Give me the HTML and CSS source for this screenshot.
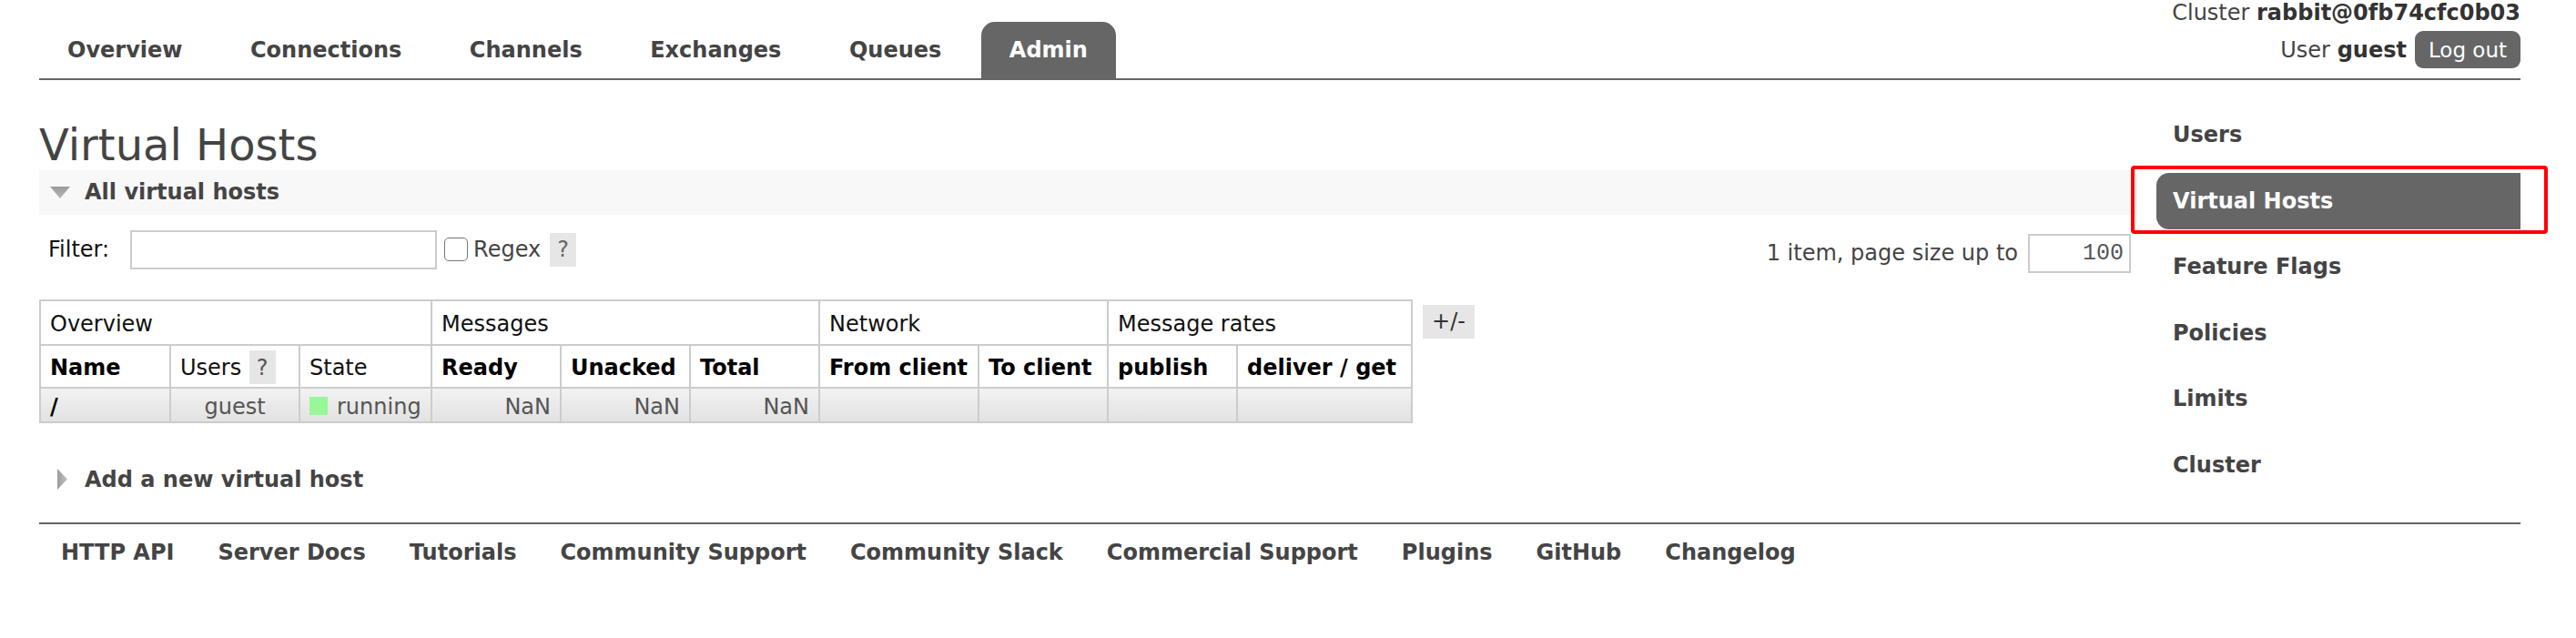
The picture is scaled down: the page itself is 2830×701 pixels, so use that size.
FILE: index.html
```html
<!DOCTYPE html>
<html lang="en">
<head>
<meta charset="utf-8">
<title>RabbitMQ Management: Virtual Hosts</title>
<link rel="stylesheet" href="styles.css">
</head>
<body>
<div class="outer">
  <header class="header">
    <ul class="tabs">
      <li><a href="#">Overview</a></li>
      <li><a href="#">Connections</a></li>
      <li><a href="#">Channels</a></li>
      <li><a href="#">Exchanges</a></li>
      <li><a href="#">Queues</a></li>
      <li><a class="selected" href="#">Admin</a></li>
    </ul>
    <div class="topnav">
      <div class="topnav-line">Cluster <b>rabbit@0fb74cfc0b03</b></div>
      <div class="user-line"><span>User <b>guest</b></span><button class="logout" type="button">Log out</button></div>
    </div>
  </header>

  <div class="content">
    <main class="main">
      <h1>Virtual Hosts</h1>
      <section>
        <h2 class="section-head open">
          <svg class="tri" width="22" height="13" viewBox="0 0 22 13"><defs><linearGradient id="g1" x1="0" y1="0" x2="0" y2="1"><stop offset="0" stop-color="#9a9a9a"/><stop offset="1" stop-color="#b8b8b8"/></linearGradient></defs><polygon points="0,0 22,0 11,13" fill="url(#g1)"/></svg>
          <span>All virtual hosts</span>
        </h2>
        <div class="filter-row">
          <div class="filter">
            <label class="filter-label" for="filter">Filter:</label>
            <input class="filter-input" id="filter" type="text">
            <input class="checkbox" id="regex" type="checkbox">
            <label class="regex-label" for="regex">Regex</label>
            <span class="help">?</span>
          </div>
          <div class="paging">
            <span>1 item, page size up to</span>
            <input class="page-size" type="text" value="100">
          </div>
        </div>
        <div class="table-wrap">
          <table class="list">
            <thead>
              <tr class="group-row">
                <th colspan="3">Overview</th>
                <th colspan="3">Messages</th>
                <th colspan="2">Network</th>
                <th colspan="2">Message rates</th>
              </tr>
              <tr class="col-row">
                <th class="w-name">Name</th>
                <th class="w-std plain">Users <span class="help help-th">?</span></th>
                <th class="w-state plain">State</th>
                <th class="w-std">Ready</th>
                <th class="w-std">Unacked</th>
                <th class="w-std">Total</th>
                <th class="w-from">From client</th>
                <th class="w-std">To client</th>
                <th class="w-std">publish</th>
                <th class="w-deliver">deliver / get</th>
              </tr>
            </thead>
            <tbody>
              <tr class="data-row">
                <td class="name">/</td>
                <td class="c">guest</td>
                <td><span class="state-dot"></span>running</td>
                <td class="r">NaN</td>
                <td class="r">NaN</td>
                <td class="r">NaN</td>
                <td></td>
                <td></td>
                <td></td>
                <td></td>
              </tr>
            </tbody>
          </table>
          <span class="plus-minus">+/-</span>
        </div>
      </section>
      <h2 class="section-head closed">
        <svg class="tri" width="22" height="23" viewBox="0 0 22 23"><defs><linearGradient id="g2" x1="0" y1="0" x2="1" y2="0"><stop offset="0" stop-color="#9a9a9a"/><stop offset="1" stop-color="#c4c4c4"/></linearGradient></defs><polygon points="8,0 19,11.5 8,23" fill="url(#g2)"/></svg>
        <span>Add a new virtual host</span>
      </h2>
    </main>

    <nav class="rhs">
      <ul>
        <li><a href="#">Users</a></li>
        <li><a class="selected" href="#">Virtual Hosts</a><span class="annot"></span></li>
        <li><a href="#">Feature Flags</a></li>
        <li><a href="#">Policies</a></li>
        <li><a href="#">Limits</a></li>
        <li><a href="#">Cluster</a></li>
      </ul>
    </nav>
  </div>

  <footer class="footer">
    <a href="#">HTTP API</a>
    <a href="#">Server Docs</a>
    <a href="#">Tutorials</a>
    <a href="#">Community Support</a>
    <a href="#">Community Slack</a>
    <a href="#">Commercial Support</a>
    <a href="#">Plugins</a>
    <a href="#">GitHub</a>
    <a href="#">Changelog</a>
  </footer>
</div>
</body>
</html>
```

FILE: styles.css
```css
html, body {
  margin: 0;
  padding: 0;
  background: #fff;
}

body {
  font-family: "DejaVu Sans", Verdana, sans-serif;
  font-size: 24px;
  line-height: 28px;
  color: #444;
}

.outer {
  padding: 0 61px 0 43px;
}

/* ---------- header ---------- */
.header {
  display: flex;
  justify-content: space-between;
  align-items: flex-start;
  border-bottom: 2px solid #666;
}

.tabs {
  display: flex;
  gap: 12.5px;
  list-style: none;
  margin: 24px 0 0;
  padding: 0;
}

.tabs a {
  display: block;
  padding: 17px 31px;
  font-weight: bold;
  color: #444;
  text-decoration: none;
}

.tabs a.selected {
  background: #666;
  color: #fff;
  border-radius: 15px 15px 0 0;
}

.topnav {
  display: flex;
  flex-direction: column;
  align-items: flex-end;
}

.topnav-line b,
.user-line b {
  color: #333;
}

.user-line {
  display: flex;
  align-items: baseline;
  gap: 9px;
  margin-top: 6px;
}

.logout {
  font-family: inherit;
  font-size: 23px;
  line-height: 28px;
  color: #fff;
  background: #666;
  border: 0;
  border-radius: 9px;
  padding: 7px 15px 6px;
  margin: 0;
}

/* ---------- content ---------- */
.content {
  display: flex;
  gap: 21px;
}

.main {
  flex: 1;
  min-width: 0;
}

h1 {
  margin: 42.5px 0 0;
  font-size: 48px;
  line-height: 56px;
  font-weight: normal;
  color: #444;
}

.section-head {
  display: flex;
  align-items: center;
  gap: 16px;
  margin: 0;
  padding: 10.5px 12px;
  font-size: 24px;
  line-height: 28px;
  font-weight: bold;
  color: #444;
}

.section-head.open {
  background: #f8f8f8;
}

.section-head.closed {
  margin-top: 37.5px;
}

.tri {
  display: block;
  flex: none;
}

/* ---------- filter row ---------- */
.filter-row {
  display: flex;
  justify-content: space-between;
  align-items: flex-start;
  margin-top: 17px;
}

.filter {
  display: flex;
  align-items: center;
  padding-left: 10px;
}

.filter-label {
  color: #111;
}

.filter-input {
  width: 337px;
  height: 43px;
  box-sizing: border-box;
  border: 2px solid #ccc;
  margin: 0 0 0 23px;
  padding: 0 6px;
  font: inherit;
  background: #fff;
}

.checkbox {
  appearance: none;
  -webkit-appearance: none;
  width: 26px;
  height: 26px;
  box-sizing: border-box;
  margin: 0 6px 0 8px;
  border: 1.5px solid #767676;
  border-radius: 5px;
  background: #fff;
}

.regex-label {
  color: #444;
  margin-right: 10px;
}

.help {
  display: inline-block;
  background: #e6e6e6;
  color: #666;
  padding: 4.5px 8px;
  line-height: 28px;
}

.paging {
  display: flex;
  align-items: center;
  gap: 11px;
  margin: 4px 7px 0 0;
  color: #444;
}

.page-size {
  width: 113px;
  height: 43px;
  box-sizing: border-box;
  border: 2px solid #ccc;
  margin: 0;
  padding: 0 6px 0 0;
  text-align: right;
  font-family: "Liberation Mono", "DejaVu Sans Mono", monospace;
  font-size: 25px;
  color: #555;
  background: #fff;
}

/* ---------- table ---------- */
.table-wrap {
  display: flex;
  align-items: flex-start;
  gap: 11px;
  margin-top: 29px;
}

table.list {
  border-collapse: collapse;
  border: 2px solid #ccc;
}

table.list th,
table.list td {
  border: 2px solid #ccc;
  padding: 0 10px;
  text-align: left;
  white-space: nowrap;
  line-height: 28px;
  vertical-align: top;
}

table.list .group-row th {
  font-weight: normal;
  color: #111;
  padding-top: 11px;
  padding-bottom: 8px;
}

table.list .col-row th {
  font-weight: bold;
  color: #000;
  padding-top: 10px;
  padding-bottom: 7px;
}

table.list .col-row th.plain {
  font-weight: normal;
  color: #111;
}

.help-th {
  vertical-align: top;
  margin: -4.5px 0 -4.5px 1px;
  color: #555;
  font-weight: normal;
}

.w-name { width: 121px; }
.w-std { width: 120px; }
.w-state { width: 123px; }
.w-from { width: 153px; }
.w-deliver { width: 170px; }

table.list .data-row td {
  background: linear-gradient(#f2f2f2, #e2e2e2);
  color: #555;
  padding-top: 6px;
  padding-bottom: 2px;
}

table.list .data-row td.name {
  color: #000;
  font-weight: bold;
}

table.list .data-row td.c { text-align: center; }
table.list .data-row td.r { text-align: right; }

.state-dot {
  display: inline-block;
  width: 20px;
  height: 20px;
  background: #98f898;
  margin-right: 10px;
  vertical-align: -1px;
}

.plus-minus {
  display: inline-block;
  flex: none;
  margin-top: 6px;
  width: 57px;
  height: 37px;
  line-height: 37px;
  text-align: center;
  background: #e6e6e6;
  color: #333;
}

/* ---------- right-hand menu ---------- */
.rhs {
  width: 400px;
  flex: none;
}

.rhs ul {
  list-style: none;
  margin: 29px 0 0;
  padding: 0;
}

.rhs li {
  position: relative;
  margin-bottom: 10.5px;
}

.rhs a {
  display: block;
  padding: 17px 18px;
  font-weight: bold;
  color: #444;
  text-decoration: none;
}

.rhs a.selected {
  background: #666;
  color: #fff;
  border-radius: 14px 0 0 14px;
}

.annot {
  position: absolute;
  top: -8px;
  left: -28px;
  right: -30px;
  bottom: -5px;
  border: 4px solid #f00;
  border-radius: 4px;
  pointer-events: none;
}

/* ---------- footer ---------- */
.footer {
  display: flex;
  margin-top: 22px;
  padding-top: 17px;
  border-top: 2px solid #666;
}

.footer a {
  padding: 0 24px;
  font-weight: bold;
  color: #444;
  text-decoration: none;
}
```
